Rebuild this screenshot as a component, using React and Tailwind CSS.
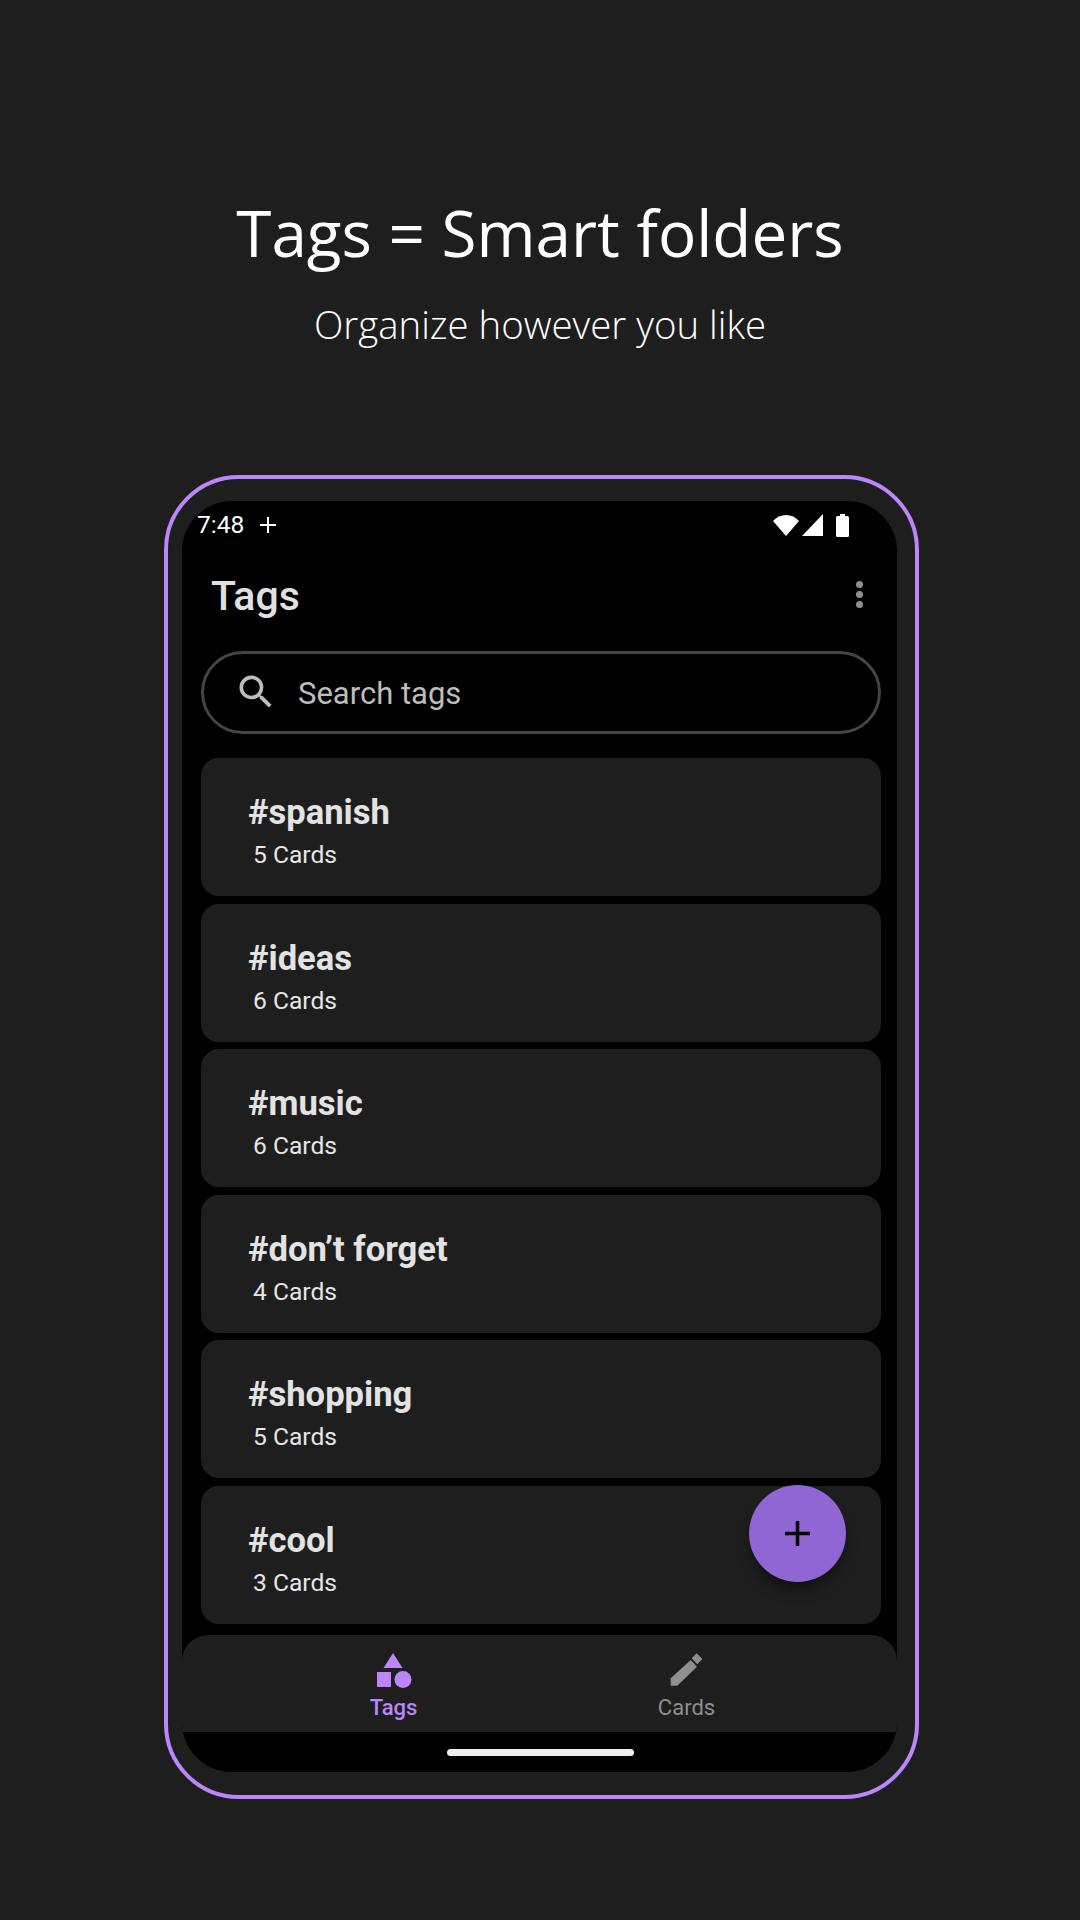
const tags = [
  { name: "#spanish", count: 5 },
  { name: "#ideas", count: 6 },
  { name: "#music", count: 6 },
  { name: "#don’t forget", count: 4 },
  { name: "#shopping", count: 5 },
  { name: "#cool", count: 3 },
];

function TagCard({ name, count }) {
  return (
    <div className="h-[138px] rounded-[18px] bg-[#1e1e1e] pl-[47.5px] pt-[32px]">
      <div className="text-[34.6px] leading-[44px] font-bold text-[#e3e3e3]">{name}</div>
      <div className="pl-[5px] mt-[5px] text-[24.6px] leading-[32px] text-[#e6e6e6]">{count} Cards</div>
    </div>
  );
}

export default function App() {
  return (
    <div className="w-[1080px] h-[1920px] bg-[#1e1e1e] overflow-hidden font-['Roboto',sans-serif]">
      <div className="pt-[196px] text-center text-white font-['Open_Sans',sans-serif]">
        <h1 className="text-[63.8px] leading-[74px] font-medium">Tags = Smart folders</h1>
        <p className="mt-[29px] text-[38.4px] leading-[50px] font-light">Organize however you like</p>
      </div>

      <div className="ml-[164px] mt-[126px] w-[755px] h-[1324px] rounded-[75px] border-[4px] border-[#bb86fc] pt-[22px] pl-[14px] pr-[18px]">
        <div className="relative h-[1271px] rounded-[50px] bg-black overflow-hidden flex flex-col">
          <div className="h-[48px] shrink-0 flex items-center pl-[15px] pr-[48px] text-white">
            <span className="text-[24.5px]">7:48</span>
            <svg className="ml-[15px]" width="18" height="18" viewBox="0 0 18 18" fill="currentColor">
              <path d="M8 1h2v7h7v2h-7v7H8v-7H1V8h7z" />
            </svg>
            <div className="ml-auto flex items-center">
              <svg width="26" height="21" viewBox="0 0 26 21" fill="currentColor">
                <path d="M13 21 0 6C3.5 2.2 8 0 13 0s9.500 2.200 13 6z" />
              </svg>
              <svg className="ml-[3px]" width="21" height="22" viewBox="0 0 21 22" fill="currentColor">
                <path d="M21 0v22H0z" />
              </svg>
              <svg className="ml-[13px]" width="13" height="23" viewBox="0 0 13 23" fill="currentColor">
                <path d="M4 0h5v2h2.500A1.500 1.500 0 0 1 13 3.500v18a1.500 1.500 0 0 1-1.500 1.500h-10A1.500 1.500 0 0 1 0 21.500v-18A1.500 1.500 0 0 1 1.500 2H4z" />
              </svg>
            </div>
          </div>

          <div className="h-[94px] shrink-0 flex items-center pl-[29px] pr-[34px]">
            <span className="text-[41px] font-medium text-[#e0e0e0] pt-[2px]">Tags</span>
            <div className="ml-auto flex flex-col gap-[3px] pb-[4px]">
              <span className="size-[7px] rounded-full bg-[#8e8e8e]" />
              <span className="size-[7px] rounded-full bg-[#8e8e8e]" />
              <span className="size-[7px] rounded-full bg-[#8e8e8e]" />
            </div>
          </div>

          <div className="ml-[18.5px] mr-[16px] mt-[8px] h-[82.5px] shrink-0 rounded-full border-[3px] border-[#444444] flex items-center pl-[30.5px] text-[#bdbdbd]">
            <svg width="44" height="44" viewBox="0 0 24 24" fill="currentColor">
              <path d="M15.5 14h-.79l-.28-.27A6.47 6.47 0 0 0 16 9.5 6.500 6.500 0 1 0 9.500 16c1.610 0 3.090-.590 4.230-1.570l.270.280v.790l5 4.990L20.490 19l-4.990-5zm-6 0C7.010 14 5 11.990 5 9.500S7.010 5 9.500 5 14 7.010 14 9.500 11.990 14 9.500 14z" />
            </svg>
            <span className="ml-[20px] text-[31px] pt-[4px]">Search tags</span>
          </div>

          <div className="ml-[18.5px] mr-[16px] mt-[24.5px] flex flex-col gap-[7.5px]">
            {tags.map((t) => (
              <TagCard key={t.name} name={t.name} count={t.count} />
            ))}
          </div>

          <div className="mt-auto h-[137px] shrink-0 flex flex-col">
            <div className="h-[97px] rounded-t-[26px] bg-[#1e1e1e] flex pl-[65px] pr-[64px]">
              <div className="flex-1 flex flex-col items-center pt-[17px] text-[#bb86fc]">
                <svg width="36" height="36" viewBox="0 0 36 36" fill="currentColor">
                  <path d="M17 1l9.500 15h-19z" />
                  <rect x="1" y="20" width="14" height="15" />
                  <circle cx="27" cy="27.500" r="8.500" />
                </svg>
                <span className="text-[22px] leading-[26px] font-medium mt-[7px]">Tags</span>
              </div>
              <div className="flex-1 flex flex-col items-center pt-[17px] text-[#8f8f8f]">
                <svg width="36" height="36" viewBox="0 0 36 36" fill="currentColor">
                  <path d="M1.700 33.700V26.300L21.700 8 28 14.700 8.300 33.700z" />
                  <path d="M22.700 6.300 27.700 1.300 33.300 7 28.300 12.300z" />
                </svg>
                <span className="text-[22px] leading-[26px] mt-[7px]">Cards</span>
              </div>
            </div>
            <div className="flex-1 flex items-center justify-center pl-[2px]">
              <div className="w-[187px] h-[7px] rounded-full bg-[#eeeeee]" />
            </div>
          </div>

          <button className="absolute left-[567px] top-[984px] size-[97px] rounded-full bg-[#8f66d4] shadow-lg shadow-black/40 flex items-center justify-center text-black">
            <svg width="25" height="25" viewBox="0 0 25 25" fill="currentColor">
              <path d="M10.750 0h3.500v10.750H25v3.500H14.250V25h-3.500V14.250H0v-3.500h10.750z" />
            </svg>
          </button>
        </div>
      </div>
    </div>
  );
}
